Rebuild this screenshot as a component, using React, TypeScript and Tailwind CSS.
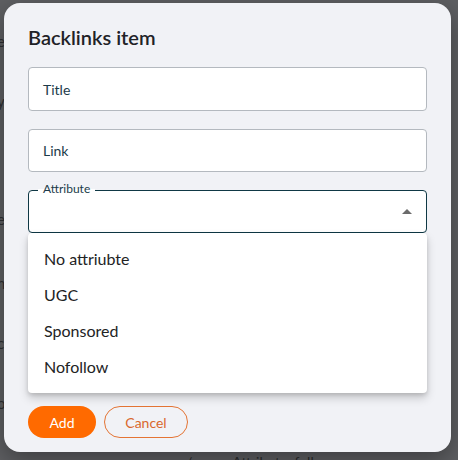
import { useState } from 'react';

const options = ['No attriubte', 'UGC', 'Sponsored', 'Nofollow'];

const sideLetters = [
  { t: 'e', top: 'top-[30px]' },
  { t: 'y', top: 'top-[90px]' },
  { t: 'l', top: 'top-[150px]' },
  { t: 'e', top: 'top-[208px]' },
  { t: 'n', top: 'top-[272px]' },
  { t: 'c', top: 'top-[332px]' },
  { t: 'o', top: 'top-[392px]' },
];

export default function App() {
  const [open] = useState(true);

  return (
    <div
      className="relative h-[460px] w-[458px] overflow-hidden bg-[#5e5f62]"
      style={{ fontFamily: 'Lato, "Noto Sans", sans-serif' }}
    >
      {/* page behind the backdrop */}
      {sideLetters.map((l, i) => (
        <span
          key={i}
          className={`absolute -left-[3px] ${l.top} text-[15px] text-[#2e2f31]`}
        >
          {l.t}
        </span>
      ))}
      <div className="absolute left-[186px] top-[451px] flex gap-[40px] text-[14px] text-[#2a2b2d]">
        <span>/</span>
        <span>Attribute: follow</span>
      </div>

      {/* dialog */}
      <div className="absolute left-[4px] top-[3px] flex h-[449px] w-[447px] flex-col rounded-[16px] bg-[#f1f2f6] px-[24px] pt-[20px] shadow-[0_8px_24px_rgba(0,0,0,0.35)]">
        <h2 className="text-[20px] font-semibold leading-[28px] text-[#1f2227]">
          Backlinks item
        </h2>

        <div className="mt-[16px] flex flex-col gap-[18px]">
          <div className="flex h-[44px] items-center rounded-[4px] border border-[#b4b9bf] bg-white px-[14px] text-[14px] text-[#1c3b4a]">
            Title
          </div>
          <div className="flex h-[43px] items-center rounded-[4px] border border-[#b4b9bf] bg-white px-[14px] text-[14px] text-[#1c3b4a]">
            Link
          </div>

          <div className="relative">
            <div className="flex h-[43px] items-center justify-end rounded-[4px] border-[1.5px] border-[#0f3845] bg-white pr-[14px]">
              <svg width="10" height="5" viewBox="0 0 10 5">
                <path d="M0 5 L5 0 L10 5 Z" fill="#6b6b6b" />
              </svg>
            </div>
            <span className="absolute -top-[9px] left-[10px] bg-[linear-gradient(to_bottom,#f1f2f6_50%,#ffffff_50%)] px-[5px] text-[12px] leading-[16px] text-[#1c3b4a]">
              Attribute
            </span>

            {open && (
              <ul className="absolute left-0 right-0 top-[43px] z-10 rounded-[4px] bg-white py-[8px] shadow-[0_5px_10px_rgba(0,0,0,0.18),0_2px_4px_rgba(0,0,0,0.12)]">
                {options.map((o) => (
                  <li
                    key={o}
                    className="flex h-[36px] items-center px-[16px] text-[16px] text-[#222324]"
                  >
                    {o}
                  </li>
                ))}
              </ul>
            )}
          </div>
        </div>

        <div className="mt-auto mb-[14px] flex gap-[8px]">
          <button className="h-[32px] w-[68px] rounded-full bg-[#ff6a00] text-[14px] text-white">
            Add
          </button>
          <button className="h-[32px] w-[84px] rounded-full border border-[#e47434] text-[14px] text-[#d9682d]">
            Cancel
          </button>
        </div>
      </div>
    </div>
  );
}
